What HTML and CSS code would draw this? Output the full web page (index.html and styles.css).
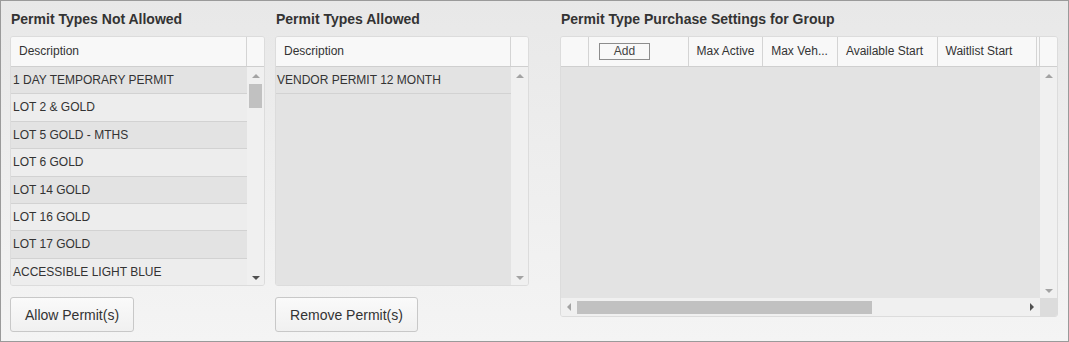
FILE: index.html
```html
<!DOCTYPE html>
<html lang="en">

<head>
    <meta charset="UTF-8">
    <meta name="viewport" content="width=device-width, initial-scale=1.0">
    <title>Permit Group Settings</title>
    <link rel="stylesheet" href="styles.css">
</head>

<body>
    <div class="panel">

        <section class="col col-left">
            <h3>Permit Types Not Allowed</h3>
            <div class="grid">
                <div class="grid-head">
                    <div class="hcell hcell-desc">Description</div>
                    <div class="hcell hcell-sb"></div>
                </div>
                <div class="grid-body">
                    <div class="rows">
                        <div class="row">1 DAY TEMPORARY PERMIT</div>
                        <div class="row">LOT 2 &amp; GOLD</div>
                        <div class="row">LOT 5 GOLD - MTHS</div>
                        <div class="row">LOT 6 GOLD</div>
                        <div class="row">LOT 14 GOLD</div>
                        <div class="row">LOT 16 GOLD</div>
                        <div class="row">LOT 17 GOLD</div>
                        <div class="row">ACCESSIBLE LIGHT BLUE</div>
                    </div>
                    <div class="vscroll">
                        <span class="arrow up"></span>
                        <span class="vthumb"></span>
                        <span class="arrow down"></span>
                    </div>
                </div>
            </div>
            <button class="btn">Allow Permit(s)</button>
        </section>

        <section class="col col-mid">
            <h3>Permit Types Allowed</h3>
            <div class="grid">
                <div class="grid-head">
                    <div class="hcell hcell-desc">Description</div>
                    <div class="hcell hcell-sb"></div>
                </div>
                <div class="grid-body">
                    <div class="rows">
                        <div class="row">VENDOR PERMIT 12 MONTH</div>
                    </div>
                    <div class="vscroll">
                        <span class="arrow up"></span>
                        <span class="arrow down"></span>
                    </div>
                </div>
            </div>
            <button class="btn">Remove Permit(s)</button>
        </section>

        <section class="col col-right">
            <h3>Permit Type Purchase Settings for Group</h3>
            <div class="grid grid-wide">
                <div class="grid-head">
                    <div class="hcell w28"></div>
                    <div class="hcell w100 add-cell"><span class="add">Add</span></div>
                    <div class="hcell w75">Max Active</div>
                    <div class="hcell w75">Max Veh...</div>
                    <div class="hcell w100">Available Start</div>
                    <div class="hcell w100">Waitlist Start</div>
                    <div class="hcell w3"></div>
                    <div class="hcell hcell-sb"></div>
                </div>
                <div class="grid-body">
                    <div class="rows"></div>
                    <div class="vscroll">
                        <span class="arrow up"></span>
                        <span class="arrow down"></span>
                    </div>
                </div>
                <div class="hscroll">
                    <div class="htrack">
                        <span class="arrow left"></span>
                        <span class="hthumb"></span>
                        <span class="arrow right"></span>
                    </div>
                    <div class="corner"></div>
                </div>
            </div>
        </section>

    </div>
</body>

</html>
```

FILE: styles.css
```css
* {
    margin: 0;
    padding: 0;
    box-sizing: border-box;
}

body {
    font-family: "Liberation Sans", Arial, sans-serif;
    font-size: 12px;
    color: #333;
    background: #fff;
}

.panel {
    width: 1069px;
    height: 342px;
    border: 1px solid #9a9a9a;
    background: linear-gradient(#e8e8e8, #f4f4f4);
    display: flex;
    padding: 0 0 0 9px;
}

.col {
    display: flex;
    flex-direction: column;
}

.col-left {
    width: 255px;
}

.col-mid {
    width: 254px;
    margin-left: 10px;
}

.col-right {
    width: 498px;
    margin-left: 31px;
}

h3 {
    font-size: 14px;
    font-weight: bold;
    color: #333;
    height: 35px;
    padding-top: 10px;
    padding-left: 1px;
}

.grid {
    height: 250px;
    border: 1px solid #dcdcdc;
    border-radius: 3px;
    background: #f0f0f0;
    display: flex;
    flex-direction: column;
    overflow: hidden;
}

.grid-wide {
    height: 281px;
}

.grid-head {
    height: 30px;
    display: flex;
    background: #f8f8f8;
    border-bottom: 1px solid #cfcfcf;
    flex-shrink: 0;
}

.hcell {
    height: 29px;
    line-height: 29px;
    padding-left: 8px;
    border-right: 1px solid #d4d4d4;
    white-space: nowrap;
    overflow: hidden;
}

.hcell-desc {
    flex: 1;
}

.hcell-sb {
    width: 17px;
    padding: 0;
    border-right: none;
}

.w28 { width: 28px; }
.w100 { width: 100px; }
.w75 { width: 75px; }
.w3 { width: 3px; padding: 0; }

.add-cell {
    padding-left: 10px;
}

.add {
    display: inline-block;
    width: 51px;
    height: 17px;
    line-height: 15px;
    border: 1px solid #8c8c8c;
    text-align: center;
    color: #444;
    vertical-align: middle;
    margin-top: -1px;
}

.grid-body {
    flex: 1;
    display: flex;
    min-height: 0;
}

.rows {
    flex: 1;
    background: #e3e3e3;
    overflow: hidden;
}

.row {
    height: 27.4px;
    line-height: 26px;
    padding-left: 2px;
    border-bottom: 1px solid #d2d2d2;
    white-space: nowrap;
}

.row:nth-child(odd) {
    background: #e3e3e3;
}

.row:nth-child(even) {
    background: #ededed;
}

.col-mid .row {
    background: #e3e3e3;
    padding-left: 1px;
}

.vscroll {
    width: 17px;
    background: #f0f0f0;
    display: flex;
    flex-direction: column;
    align-items: center;
    padding: 7px 0 5px;
}

.vthumb {
    width: 13px;
    height: 24px;
    background: #c1c1c1;
    margin-top: 6px;
}

.arrow {
    width: 0;
    height: 0;
    border-style: solid;
    border-color: transparent;
}

.arrow.up {
    border-width: 0 4px 4px 4px;
    border-bottom-color: #a3a3a3;
}

.arrow.down {
    margin-top: auto;
    border-width: 4px 4px 0 4px;
    border-top-color: #505050;
}

.col-mid .arrow.down,
.col-right .arrow.down {
    border-top-color: #a3a3a3;
}

.hscroll {
    height: 18px;
    display: flex;
    flex-shrink: 0;
}

.htrack {
    flex: 1;
    background: #f0f0f0;
    display: flex;
    align-items: center;
    padding: 0 6px 0 6px;
}

.arrow.left {
    border-width: 4px 4px 4px 0;
    border-right-color: #a3a3a3;
}

.arrow.right {
    margin-left: auto;
    border-width: 4px 0 4px 4px;
    border-left-color: #505050;
}

.hthumb {
    width: 295px;
    height: 13px;
    background: #c1c1c1;
    margin-left: 6px;
}

.corner {
    width: 17px;
    background: #dcdcdc;
}

.btn {
    margin-top: 11px;
    align-self: flex-start;
    height: 35px;
    padding: 0 14px;
    font-family: "Liberation Sans", Arial, sans-serif;
    font-size: 14px;
    color: #333;
    border: 1px solid #c8c8c8;
    border-radius: 3px;
    background: linear-gradient(#fafafa, #f0f0f0);
}

.col-left .btn {
    width: 124px;
    padding: 0;
}

.col-mid .btn {
    width: 143px;
    padding: 0;
}
```
